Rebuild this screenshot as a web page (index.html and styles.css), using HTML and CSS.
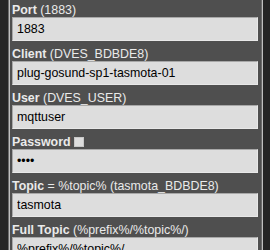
FILE: index.html
```html
<!DOCTYPE html>
<html>
<head>
<meta charset="utf-8">
<link rel="stylesheet" href="styles.css">
</head>
<body>
<fieldset class="panel">
  <div class="row">
    <div class="label"><b>Port</b> (1883)</div>
    <input class="field" type="text" value="1883">
  </div>
  <div class="row">
    <div class="label"><b>Client</b> (DVES_BDBDE8)</div>
    <input class="field" type="text" value="plug-gosund-sp1-tasmota-01">
  </div>
  <div class="row">
    <div class="label"><b>User</b> (DVES_USER)</div>
    <input class="field" type="text" value="mqttuser">
  </div>
  <div class="row">
    <div class="label"><b>Password</b> <span class="check"></span></div>
    <input class="field" type="password" value="****">
  </div>
  <div class="row">
    <div class="label"><b>Topic</b> = %topic% (tasmota_BDBDE8)</div>
    <input class="field" type="text" value="tasmota">
  </div>
  <div class="row">
    <div class="label"><b>Full Topic</b> (%prefix%/%topic%/)</div>
    <input class="field" type="text" value="%prefix%/%topic%/">
  </div>
</fieldset>
</body>
</html>
```
FILE: styles.css
```css
html, body {
  margin: 0;
  padding: 0;
  background: #252525;
  font-family: "Liberation Sans", Arial, sans-serif;
  font-size: 12.4px;
  overflow: hidden;
}
.panel {
  margin: 0 0 0 8px;
  width: 255px;
  box-sizing: border-box;
  background: #4f4f4f;
  border: 2px groove #c0c0c0;
  border-top: 0;
  padding: 3px 3px 0 2px;
  min-height: 260px;
}
.row {
  display: flex;
  flex-direction: column;
  margin-bottom: 6px;
}
.label {
  color: #eaeaea;
  line-height: 14px;
  height: 14px;
  display: flex;
  align-items: center;
  white-space: pre;
}
.label b {
  font-weight: bold;
}
.check {
  display: inline-block;
  width: 8px;
  height: 8px;
  background: #dddddd;
  border: 1px solid #c8c8c8;
  margin-left: 3px;
  margin-top: 0;
}
.field {
  box-sizing: border-box;
  width: 100%;
  height: 24px;
  margin: 0;
  padding: 0 4px;
  background: #dddddd;
  color: #000;
  font-family: "Liberation Sans", Arial, sans-serif;
  font-size: 12.4px;
  line-height: 14px;
  border: 1px solid;
  border-color: #a8a8a8 #e8e8e8 #e8e8e8 #a8a8a8;
  outline: none;
}
```
